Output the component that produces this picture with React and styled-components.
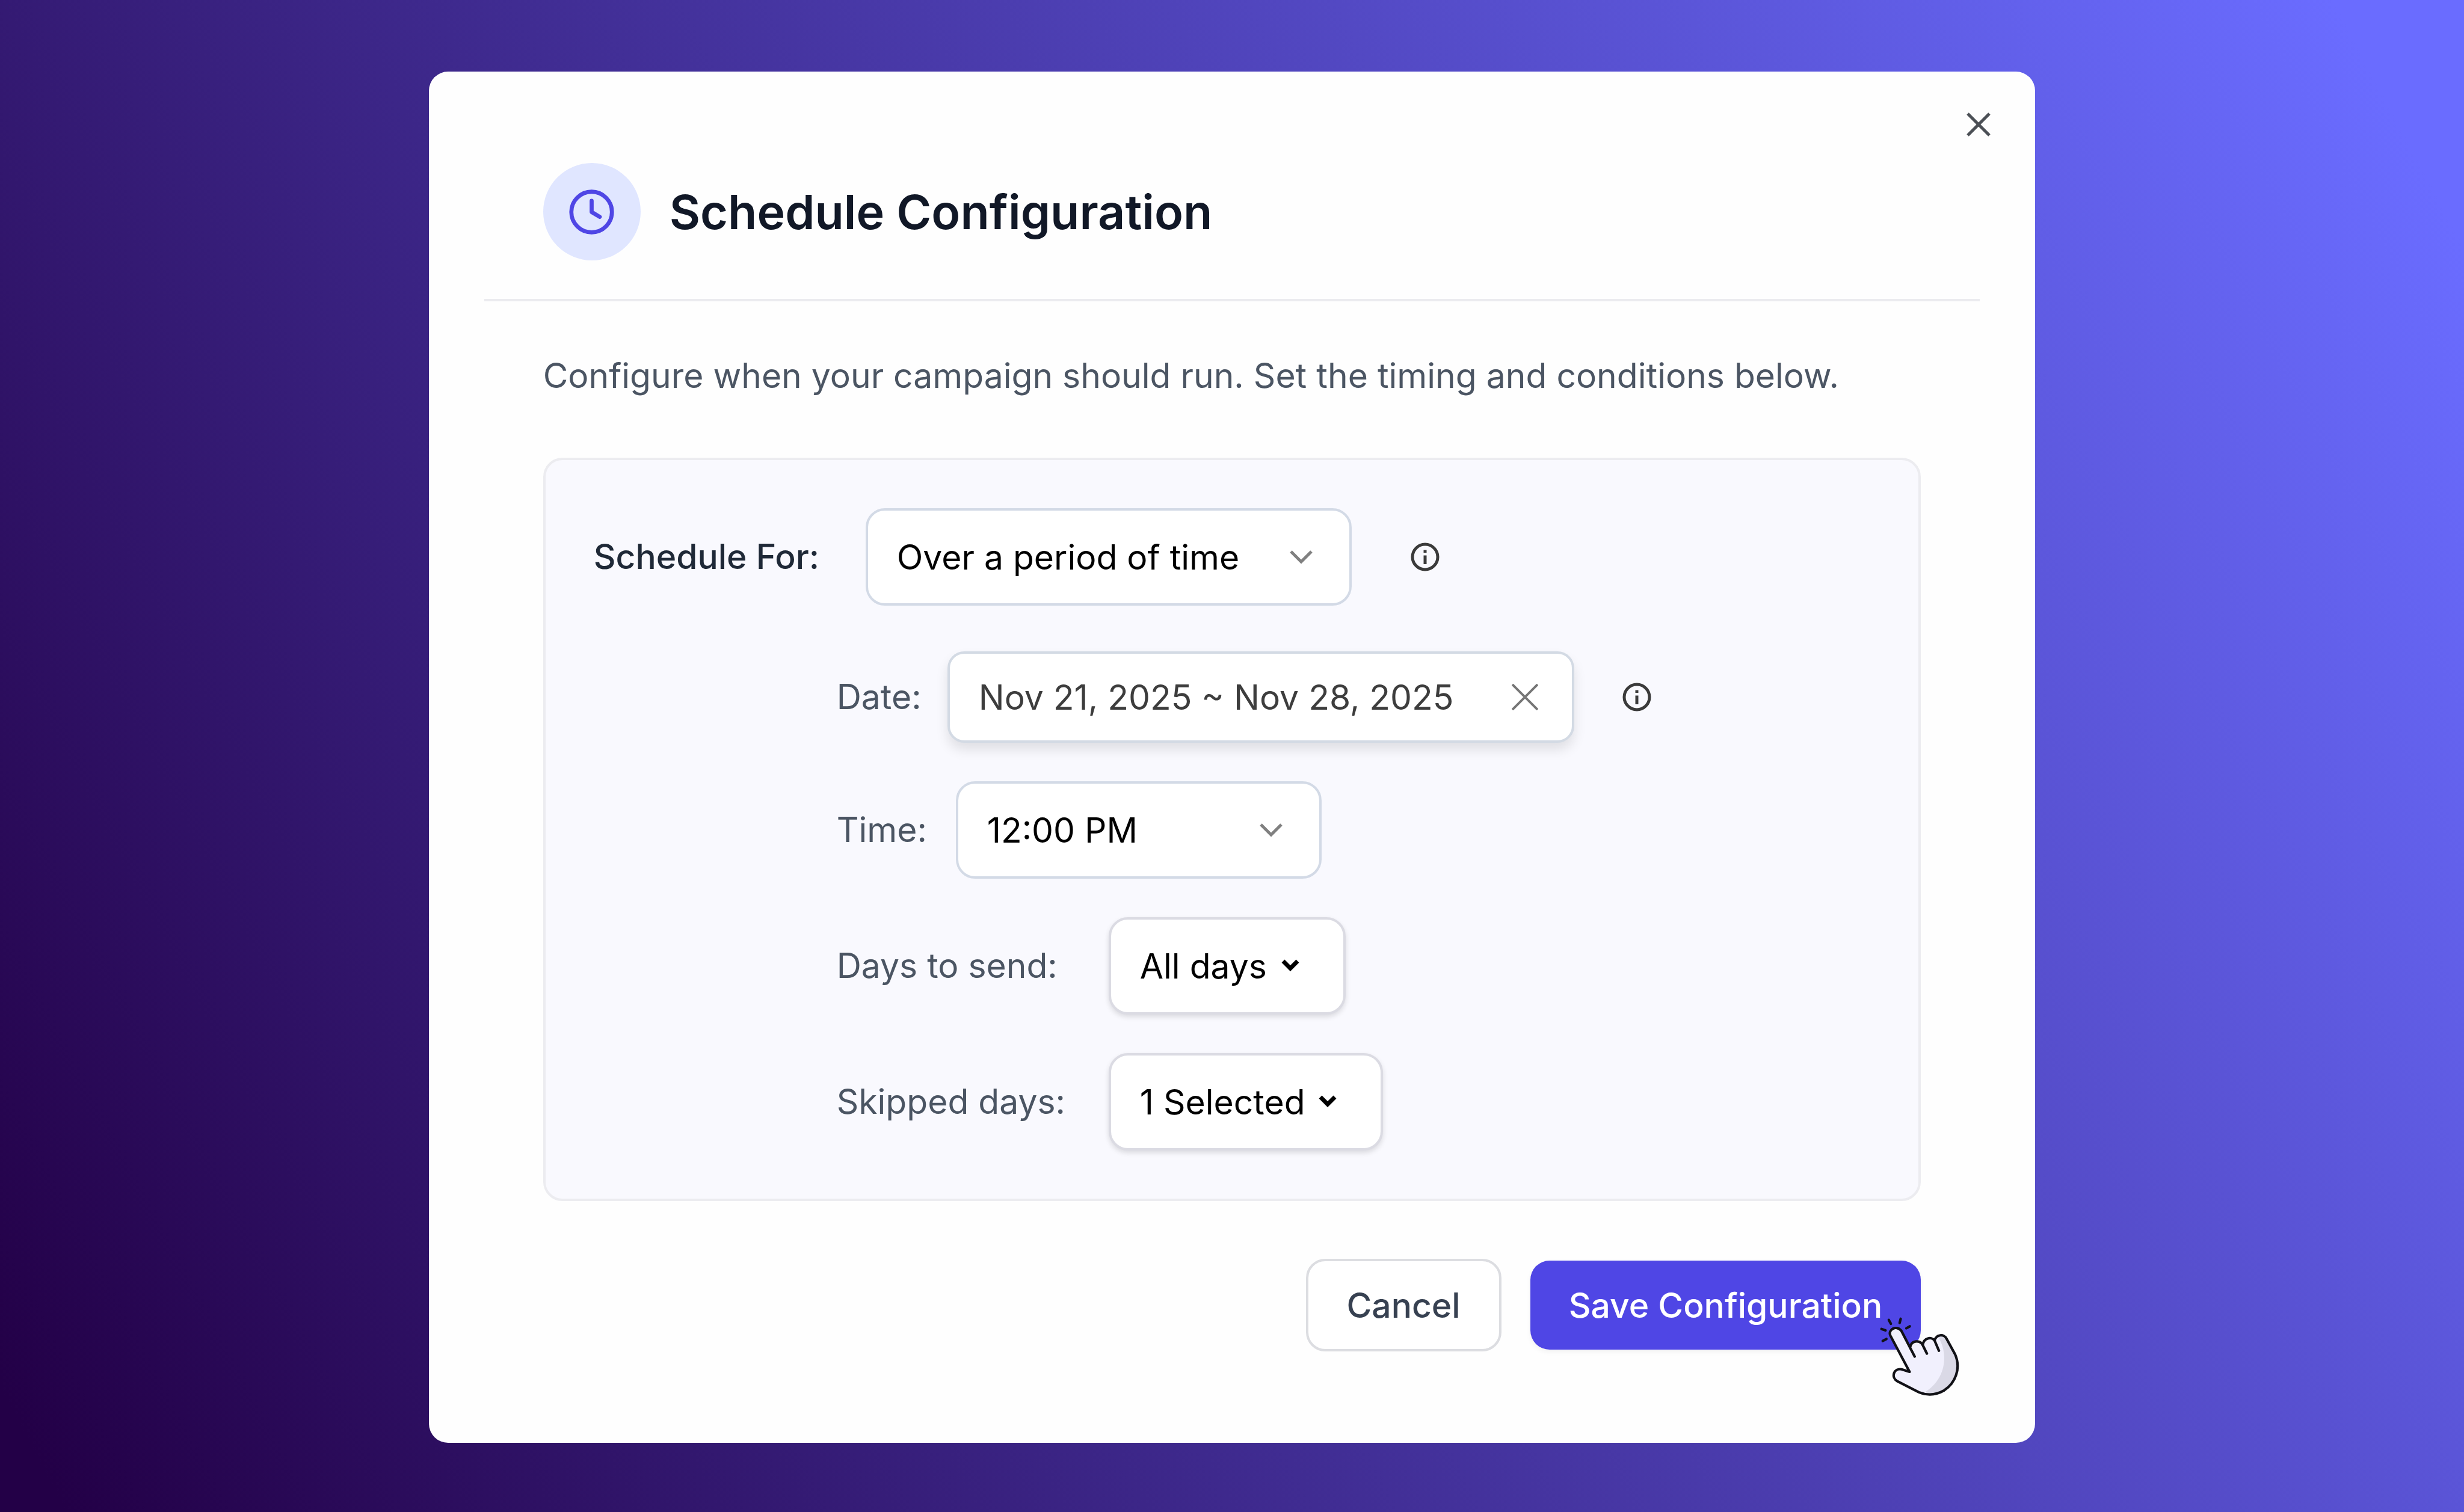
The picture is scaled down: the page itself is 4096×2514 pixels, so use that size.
import React from "react";
import styled, { createGlobalStyle } from "styled-components";

const GlobalStyle = createGlobalStyle`
  * { box-sizing: border-box; }
  body { margin: 0; font-family: Inter, "Liberation Sans", sans-serif; font-optical-sizing: none; }
  button, input, select { font: inherit; font-optical-sizing: inherit; }
`;

const Backdrop = styled.main`
  min-height: 100vh;
  padding-top: 4px;
  display: grid;
  justify-items: center;
  align-items: center;
  background: linear-gradient(62deg, #230047 2%, #6a6cff 96%);
`;

const Dialog = styled.section`
  width: 65.2%;
  padding: 68px 0 152px;
  background: #fefefe;
  border-radius: 32px;
`;

const CloseRow = styled.div`
  display: flex;
  justify-content: flex-end;
  padding-right: 74px;
`;

const IconButton = styled.button`
  display: flex;
  padding: 0;
  border: 0;
  background: none;
  color: ${(p) => p.$color || "#4b4f55"};
`;

const Header = styled.header`
  display: flex;
  align-items: center;
  gap: 48px;
  margin: 0 92px;
  padding: 44px 98px 64px;
  border-bottom: 4px solid #ebebef;
`;

const Badge = styled.span`
  display: grid;
  place-items: center;
  width: 162px;
  height: 162px;
  border-radius: 50%;
  background: #e0e6ff;
  color: #4f46e5;
`;

const Title = styled.h1`
  margin: 0;
  font-size: 79px;
  line-height: 96px;
  font-weight: 600;
  color: #111827;
`;

const Body = styled.div`
  padding: 80px 190px 0;
`;

const Intro = styled.p`
  margin: 0 0 92px;
  font-size: 57px;
  line-height: 88px;
  color: #4b5563;
`;

const Panel = styled.div`
  display: flex;
  flex-direction: column;
  gap: 64px;
  padding: 80px;
  background: #f9f9fe;
  border: 4px solid #ececf0;
  border-radius: 32px;
`;

const Row = styled.div`
  display: flex;
  align-items: center;
  padding-left: ${(p) => (p.$nested ? 404 : 0)}px;
  margin-bottom: ${(p) => (p.$spaced ? 12 : 0)}px;
`;

const Label = styled.label`
  width: ${(p) => p.$width}px;
  font-size: 57px;
  line-height: 72px;
  font-weight: ${(p) => (p.$strong ? 500 : 400)};
  color: ${(p) => (p.$strong ? "#1f2937" : "#4b5563")};
`;

const Field = styled.div`
  display: grid;
  align-items: center;
  width: ${(p) => p.$width}px;
  margin-right: ${(p) => p.$after || 0}px;
  & > * { grid-area: 1 / 1; }
  & > svg, & > button { justify-self: end; margin-right: ${(p) => p.$inset}px; }
  & > svg { pointer-events: none; }
`;

const Select = styled.select`
  appearance: none;
  width: 100%;
  height: 162px;
  padding: 0 48px;
  border: 4px solid ${(p) => (p.$raised ? "#dbdbe3" : "#d3dae6")};
  border-radius: 32px;
  background: #fff;
  color: #000;
  font-size: 57px;
  box-shadow: ${(p) => (p.$raised ? "0 4px 8px rgba(0, 0, 0, 0.12)" : "none")};
`;

const DateInput = styled.input`
  width: 100%;
  height: 152px;
  padding: 0 48px;
  border: 4px solid #d3dae4;
  border-radius: 28px;
  background: #fff;
  color: #3d3d3d;
  font-size: 57px;
  box-shadow: 0 12px 20px rgba(0, 0, 0, 0.1);
`;

const Actions = styled.footer`
  display: flex;
  justify-content: flex-end;
  align-items: center;
  gap: 48px;
  padding-top: 96px;
`;

const Button = styled.button`
  position: relative;
  height: ${(p) => (p.$primary ? 148 : 154)}px;
  padding: 0 64px;
  border: ${(p) => (p.$primary ? "0" : "4px solid #dcdde1")};
  border-radius: 32px;
  background: ${(p) => (p.$primary ? "#4f46e5" : "#fff")};
  color: ${(p) => (p.$primary ? "#fff" : "#374151")};
  font-size: 57px;
  font-weight: 500;
  box-shadow: ${(p) => (p.$primary ? "0 4px 8px rgba(0, 0, 0, 0.05)" : "none")};
`;

const Pointer = styled.svg`
  position: absolute;
  right: -66px;
  bottom: -78px;
  width: 136px;
  height: 134px;
`;

const ClockIcon = () => (
  <svg width="81" height="81" viewBox="0 0 24 24" fill="none" stroke="currentColor"
    strokeWidth="2" strokeLinecap="round" strokeLinejoin="round" aria-hidden="true">
    <circle cx="12" cy="12" r="10" />
    <path d="M12 6.5V12l4 2.4" />
  </svg>
);

const Chevron = () => (
  <svg width="48" height="48" viewBox="0 0 48 48" fill="none" stroke="#808080" strokeWidth="5" aria-hidden="true">
    <path d="M7 15 L24 32 L41 15" />
  </svg>
);

const SmallChevron = () => (
  <svg width="32" height="32" viewBox="0 0 32 32" fill="none" stroke="#000" strokeWidth="7" aria-hidden="true">
    <path d="M4 8 L16 20 L28 8" />
  </svg>
);

const Info = () => (
  <IconButton type="button" aria-label="More information" $color="#3b3b3b">
    <svg width="48" height="48" viewBox="0 0 48 48" fill="none" stroke="currentColor" strokeWidth="5" aria-hidden="true">
      <circle cx="24" cy="24" r="21" />
      <path d="M24 21.5V36M24 12.5V17" />
    </svg>
  </IconButton>
);

const Hand = () => (
  <Pointer viewBox="150 140 550 540" fill="none" stroke="#111116" strokeWidth="17"
    strokeLinecap="round" strokeLinejoin="round" aria-hidden="true">
    <path fill="#f1f0fd" stroke="none"
      d="M358 515 L227 278 C208 230 274 196 304 242 L363 345 C372 302 428 300 446 335 C452 285 506 276 526 305 C536 262 590 258 606 292 L664 398 C704 490 668 588 590 640 C530 674 470 672 420 652 L272 576 C232 550 252 488 304 498 Z" />
    <path fill="#dad9e6" stroke="none"
      d="M545 275 C620 380 610 560 460 652 C520 676 570 656 600 634 C670 580 702 490 664 398 L606 292 C594 268 566 262 545 275 Z" />
    <path d="M392 412 L304 242 C274 196 208 230 229 272 L358 515 L304 498 C252 488 232 550 272 576 L420 652 C470 672 530 674 590 640 C668 588 704 490 664 398 L606 292 C590 258 536 262 526 305 M363 345 C372 302 428 300 446 335 M446 335 C452 285 506 276 526 305 M446 335 L474 392 M526 305 L555 373" />
    <path d="M218 166 L232 192 M298 158 L291 186 M336 222 L359 209 M169 227 L196 236 M177 307 L202 294" />
  </Pointer>
);

export default function App() {
  return (
    <>
      <GlobalStyle />
      <Backdrop>
        <Dialog role="dialog" aria-labelledby="dialog-title">
          <CloseRow>
            <IconButton type="button" aria-label="Close">
              <svg width="40" height="40" viewBox="0 0 40 40" stroke="currentColor" strokeWidth="5" aria-hidden="true">
                <path d="M2 2L38 38M38 2L2 38" />
              </svg>
            </IconButton>
          </CloseRow>
          <Header>
            <Badge>
              <ClockIcon />
            </Badge>
            <Title id="dialog-title">Schedule Configuration</Title>
          </Header>
          <Body>
            <Intro>Configure when your campaign should run. Set the timing and conditions below.</Intro>
            <Panel>
              <Row $spaced>
                <Label htmlFor="schedule" $strong $width={452}>Schedule For:</Label>
                <Field $width={808} $inset={60} $after={98}>
                  <Select id="schedule"><option>Over a period of time</option></Select>
                  <Chevron />
                </Field>
                <Info />
              </Row>
              <Row $nested>
                <Label htmlFor="date" $width={184}>Date:</Label>
                <Field $width={1042} $inset={60} $after={80}>
                  <DateInput id="date" defaultValue="Nov 21, 2025 ~ Nov 28, 2025" />
                  <IconButton type="button" aria-label="Clear dates" $color="#777">
                    <svg width="44" height="44" viewBox="0 0 44 44" stroke="currentColor" strokeWidth="4" aria-hidden="true">
                      <path d="M1 1L43 43M43 1L1 43" />
                    </svg>
                  </IconButton>
                </Field>
                <Info />
              </Row>
              <Row $nested>
                <Label htmlFor="time" $width={198}>Time:</Label>
                <Field $width={608} $inset={60}>
                  <Select id="time"><option>12:00 PM</option></Select>
                  <Chevron />
                </Field>
              </Row>
              <Row $nested>
                <Label htmlFor="days" $width={452}>Days to send:</Label>
                <Field $width={394} $inset={76}>
                  <Select id="days" $raised><option>All days</option></Select>
                  <SmallChevron />
                </Field>
              </Row>
              <Row $nested>
                <Label htmlFor="skipped" $width={452}>Skipped days:</Label>
                <Field $width={456} $inset={76}>
                  <Select id="skipped" $raised><option>1 Selected</option></Select>
                  <SmallChevron />
                </Field>
              </Row>
            </Panel>
            <Actions>
              <Button type="button">Cancel</Button>
              <Button type="submit" $primary>
                Save Configuration
                <Hand />
              </Button>
            </Actions>
          </Body>
        </Dialog>
      </Backdrop>
    </>
  );
}
